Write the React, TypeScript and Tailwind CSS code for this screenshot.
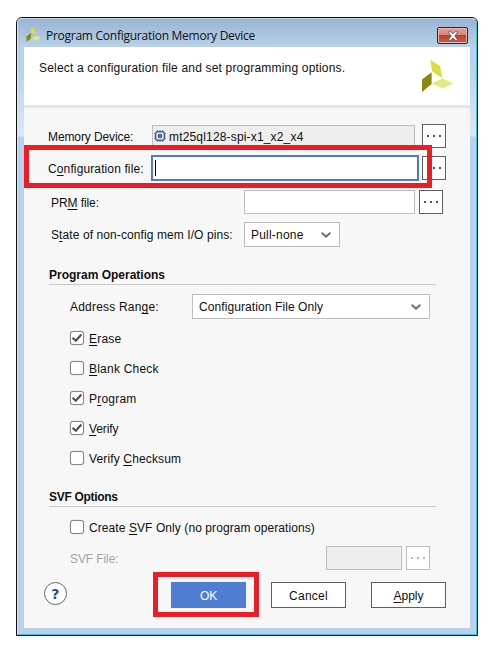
import type { ReactNode } from "react";

function Logo({ className }: { className: string }) {
  return (
    <svg viewBox="0 0 32 32" className={className}>
      <path d="M8.2 0 18 5.8 20.4 18.3 10.2 11.4Z" fill="#d6e03c" />
      <path d="M0 19.6 9.6 12.2V24L0 32Z" fill="#878a0c" />
      <path d="M9.8 23.5 20.6 18.5 31.5 23.5 21 28.6Z" fill="#e3e97e" />
    </svg>
  );
}

function Chip() {
  return (
    <svg viewBox="0 0 12 12" className="-mt-px ml-px h-3 w-3 shrink-0" fill="none" stroke="#46639b">
      <path d="M3.5 0v12M6 0v12M8.5 0v12M0 3.5h12M0 6h12M0 8.5h12" strokeWidth="0.9" />
      <rect x="1.7" y="1.7" width="8.6" height="8.6" rx="1.6" fill="#eeeeee" strokeWidth="1.4" />
      <rect x="4.4" y="4.4" width="3.2" height="3.2" fill="#46639b" />
    </svg>
  );
}

function Browse({ className = "", disabled = false }: { className?: string; disabled?: boolean }) {
  return (
    <button
      className={`flex h-6 w-6 shrink-0 items-center justify-center gap-1 border bg-white pb-px ${disabled ? "border-[#bdbdbd]" : "border-[#606060]"} ${className}`}
    >
      {[0, 1, 2].map((i) => (
        <i key={i} className={`h-0.5 w-0.5 ${disabled ? "bg-[#b8b8b8]" : "bg-[#505050]"}`} />
      ))}
    </button>
  );
}

function Chevron() {
  return (
    <svg viewBox="0 0 10 6" className="h-1.5 w-2.5" fill="none" stroke="#707070" strokeWidth="2">
      <path d="M0.6 0.8 5 4.6 9.4 0.8" />
    </svg>
  );
}

function U({ children }: { children: ReactNode }) {
  return <span className="underline decoration-1 underline-offset-2">{children}</span>;
}

function Check({ checked = false, children, className = "" }: { checked?: boolean; children: ReactNode; className?: string }) {
  return (
    <label className={`flex h-[30px] items-center pl-[46px] ${className}`}>
      <span className="mr-[5px] flex h-3.5 w-3.5 shrink-0 items-center justify-center rounded-[3px] border border-[#858585] bg-white shadow-[0_0_1px_#999]">
        {checked && (
          <svg viewBox="0 0 12 12" className="h-3 w-3 shrink-0" fill="none" stroke="#505050" strokeWidth="2.2">
            <path d="M1.6 5.8 4.8 8.8 10.4 2.6" />
          </svg>
        )}
      </span>
      <span className="pt-0.5">{children}</span>
    </label>
  );
}

export default function App() {
  return (
    <div className="h-[658px] w-[499px] overflow-hidden bg-white pl-4 pt-[17px] font-['Liberation_Sans',Arial,sans-serif] text-[12px] leading-4 text-[#101010]">
      <div className="h-[619px] w-[462px] rounded-t-[6px] border border-[#101010] bg-[#b9d1ea]">
        <div className="h-[617px] w-[460px] rounded-t-[5px] border border-l-[#d5e6f6] border-t-[#c4d8eb] border-r-[#36c5e8] border-b-[#36c5e8] bg-[linear-gradient(#9ab4d1_0px,#b9d1ea_28px,#b9d1ea_48px,#dce8f5_117px,#b9d1ea_118px)] px-1.5">
          <header className="flex h-7 items-center">
            <Logo className="mt-0.5 ml-0.5 h-[15px] w-4" />
            <h1 className="ml-1 mt-1.5 grow whitespace-nowrap font-['Open_Sans',sans-serif] text-[12px] tracking-[-0.26px]">
              Program Configuration Memory Device
            </h1>
            <button className="mr-0.5 mt-[5px] flex h-[17px] w-[31px] items-center justify-center rounded-[2px] border border-[#4a1c22] bg-[linear-gradient(#e5a297_0%,#d98678_45%,#bc4230_50%,#c95d48_100%)] shadow-[inset_0_0_0_1px_#eab5ab]">
              <svg viewBox="0 0 12 10" className="h-2.5 w-3 shrink-0">
                <path d="M1 .8H4L6 3 8 .8H11L7.7 5 11 9.2H8L6 7 4 9.2H1L4.3 5Z" fill="#fff" stroke="#535666" strokeWidth="0.8" />
              </svg>
            </button>
          </header>

          <main className="h-[581px] w-[446px] bg-[#f7f7f7]">
            <div className="flex h-[61px] justify-between border-b-3 border-[#e5e5e5] bg-white pl-[15px] pr-4">
              <p className="mt-[13px] whitespace-nowrap tracking-[0.18px]">Select a configuration file and set programming options.</p>
              <Logo className="mt-[13px] h-8 w-8" />
            </div>

            <div className="flex h-[37px] items-start pl-6 pt-4">
              <span className="mt-[5px] w-[104px] whitespace-nowrap tracking-[-0.1px]">Memory Device:</span>
              <div className="mt-px flex h-[22px] w-[263px] items-center border border-[#bdbdbd] bg-[#eeeeee]">
                <Chip />
                <span className="ml-[3px] pt-0.5 tracking-[0.17px]">mt25ql128-spi-x1_x2_x4</span>
              </div>
              <Browse className="ml-[7px]" />
            </div>

            <div className="relative flex h-[43px] w-[446px] items-center">
              <span className="w-[127px] whitespace-nowrap pl-6 pt-[5px] tracking-[0.12px]">C<U>o</U>nfiguration file:</span>
              <div className="mt-[3px] flex h-[26px] w-[268px] items-center border-2 border-[#4c7ccf] bg-white pl-0.5">
                <i className="h-4 w-px bg-black" />
              </div>
              <Browse className="ml-[3px] mt-[3px]" />
              <div className="absolute left-0 top-0 h-[43px] w-[408px] border-5 border-[#ee1c24]" />
            </div>

            <div className="flex h-[34px] items-start pl-[27px] pt-0.5">
              <span className="mt-[5px] w-[193px] tracking-[-0.08px]">PR<U>M</U> file:</span>
              <div className="h-6 w-[171px] border border-[#bdbdbd] bg-white" />
              <Browse className="ml-1" />
            </div>

            <div className="flex h-[25px] items-center pl-[27px]">
              <span className="w-[193px] whitespace-nowrap pt-px tracking-[0.09px]">S<U>t</U>ate of non-config mem I/O pins:</span>
              <div className="flex h-[25px] w-24 items-center justify-between border border-[#bdbdbd] bg-white pl-1.5 pr-2">
                <span className="pt-px tracking-[0.2px]">Pull-none</span>
                <Chevron />
              </div>
            </div>

            <h2 className="ml-[25px] mt-5 h-[18px] w-[387px] border-b border-[#c9c9c9] font-bold">Program Operations</h2>

            <div className="mt-[9px] flex h-[25px] items-center pl-[46px]">
              <span className="w-[122px] pt-px tracking-[0.2px]">Address Ran<U>g</U>e:</span>
              <div className="flex h-[25px] w-[238px] items-center justify-between border border-[#bdbdbd] bg-white pl-1.5 pr-2">
                <span className="pt-px tracking-[0.09px]">Configuration File Only</span>
                <Chevron />
              </div>
            </div>

            <div className="mt-1 tracking-[0.22px]">
              <Check checked><U>E</U>rase</Check>
              <Check><U>B</U>lank Check</Check>
              <Check checked>P<U>r</U>ogram</Check>
              <Check checked className="tracking-[-0.08px]"><U>V</U>erify</Check>
              <Check className="tracking-[0.14px]">Verify <U>C</U>hecksum</Check>
            </div>

            <h2 className="ml-[25px] mt-4 h-[18px] w-[387px] border-b border-[#c9c9c9] font-bold tracking-[-0.3px]">SVF Options</h2>
            <Check className="mt-[5px] tracking-[0.08px]">Create <U>S</U>VF Only (no program operations)</Check>

            <div className="mt-1 flex h-6 items-center pl-[46px]">
              <span className="w-64 pt-0.5 tracking-[-0.1px] text-[#a3a3a3]">SVF File:</span>
              <div className="h-6 w-[76px] border border-[#bdbdbd] bg-[#eeeeee]" />
              <Browse className="ml-1" disabled />
            </div>

            <footer className="mt-0.5 flex h-[45px] items-center pl-5 tracking-[0.24px]">
              <button className="-mt-0.5 flex h-[23px] w-[23px] items-center justify-center rounded-full border border-[#666] bg-white font-['DejaVu_Sans',sans-serif] text-[14px] font-bold text-[#2c4a86]">?</button>
              <div className="ml-[86px] flex h-[45px] w-[106px] items-center border-5 border-[#ee1c24] pl-[13px]">
                <button className="h-[26px] w-[75px] bg-[#4f7dd1] pt-0.5 tracking-[-0.2px] text-white">OK</button>
              </div>
              <button className="ml-3 h-[26px] w-[75px] border border-[#606060] bg-white pt-0.5">Cancel</button>
              <button className="ml-[25px] h-[26px] w-[75px] border border-[#606060] bg-white pt-0.5 tracking-[0px]"><U>A</U>pply</button>
            </footer>
          </main>
        </div>
      </div>
    </div>
  );
}
